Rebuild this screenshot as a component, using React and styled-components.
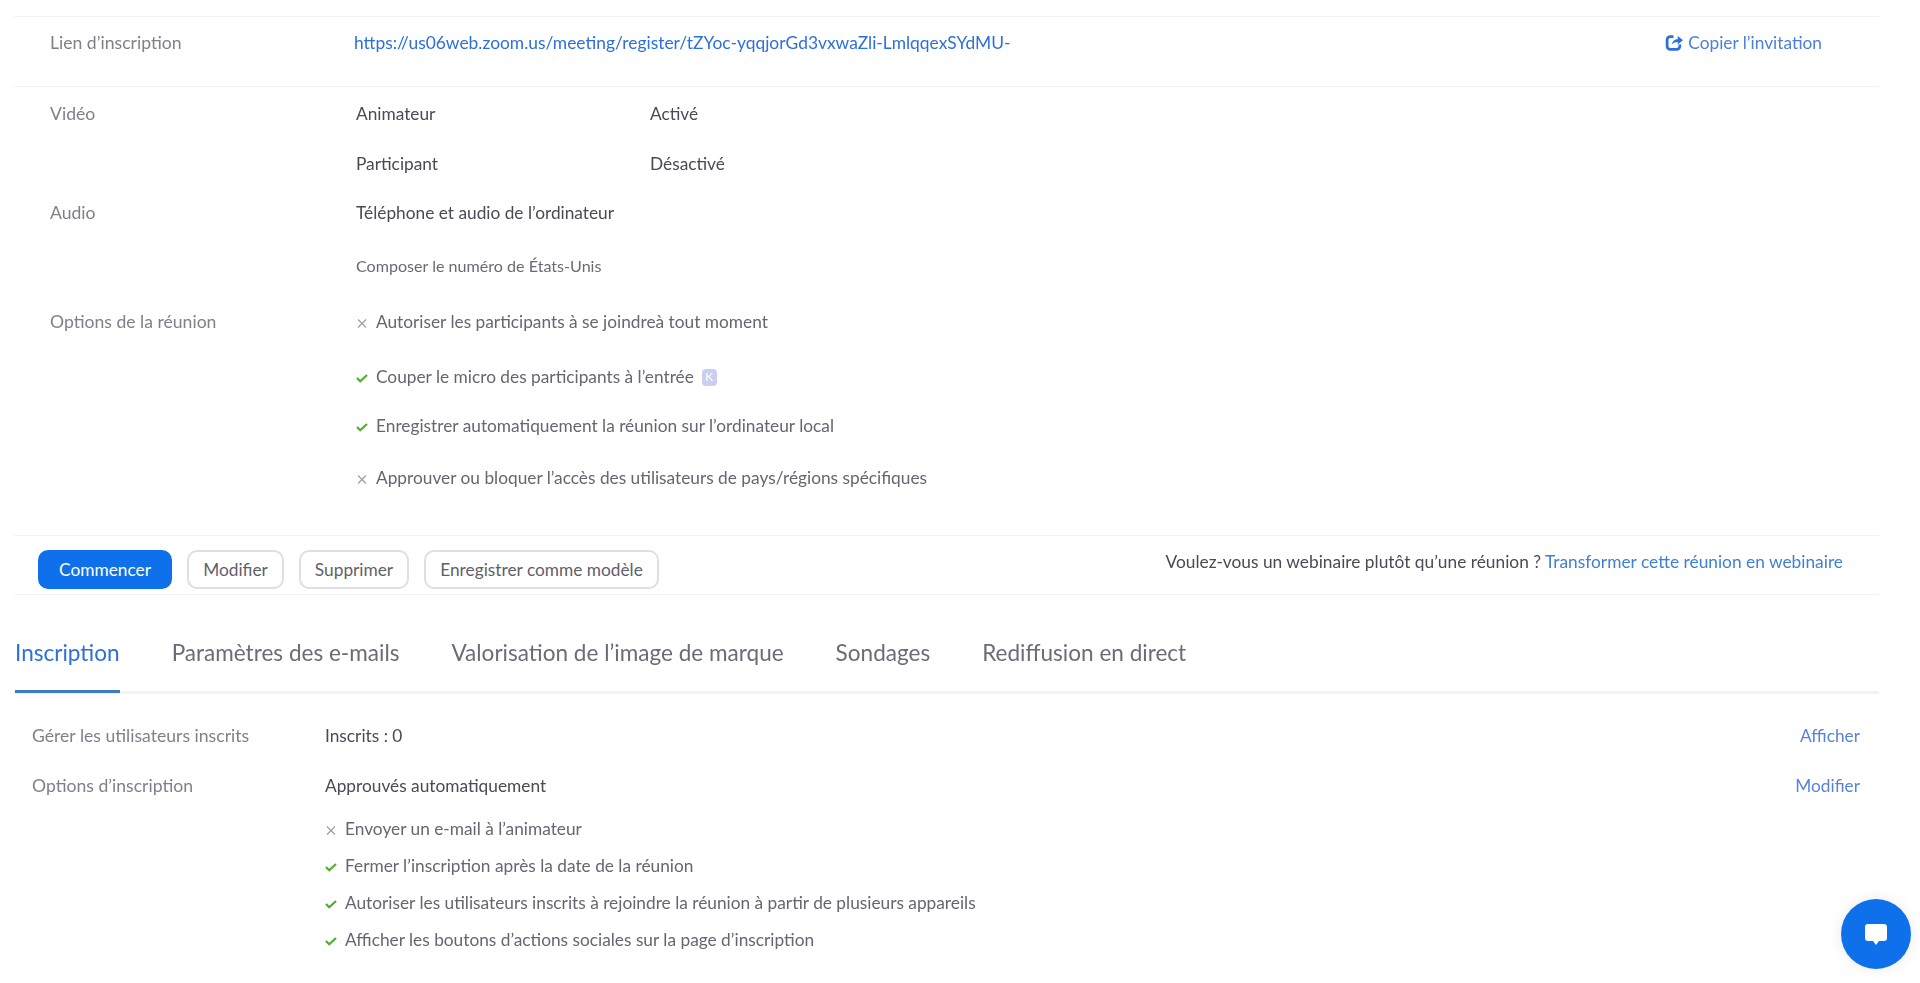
import React from "react";
import styled, { createGlobalStyle } from "styled-components";

const Global = createGlobalStyle`
  html, body { margin: 0; padding: 0; background: #fff; }
  body { font-family: Lato, "Liberation Sans", sans-serif; overflow: hidden; height: 983px; }
`;

const Page = styled.main`
  width: 1920px;
  height: 983px;
  padding: 16px 41px 0 14px;
  box-sizing: border-box;
  position: relative;
  overflow: hidden;
  filter: blur(0.55px);
`;

const Section = styled.section`
  border-top: 1px solid #f3f3f5;
  padding-left: ${(p) => p.$inset || 36}px;
  padding-top: ${(p) => p.$top || 0}px;
`;

const LinkSection = styled(Section)`
  height: 70px;
  display: flex;
  align-items: flex-start;
  padding-top: 16px;
  box-sizing: border-box;
  color: #2d6fdc;
`;

const Row = styled.div`
  display: grid;
  grid-template-columns: ${(p) => p.$label || 306}px auto 1fr;
  height: ${(p) => p.$h}px;
  align-items: center;
  font-size: 17.3px;
`;

const Label = styled.span`
  color: #80808c;
  font-size: 17.6px;
  line-height: 20px;
`;

const LinkLabel = styled(Label)`
  width: 304px;
  flex: none;
`;

const Url = styled.a`
  color: #2d6fdc;
  font-size: 17.4px;
  line-height: 20px;
  flex: 1;
`;

const Copy = styled.a`
  display: inline-flex;
  align-items: center;
  gap: 5px;
  color: #4a7fdc;
  font-size: 17.3px;
  line-height: 20px;
  margin-right: 57px;
`;

const Pair = styled.div`
  display: grid;
  grid-template-columns: 294px auto;
  color: #4b4b57;
`;

const Value = styled.span`
  color: ${(p) => p.$soft ? "#6a6a76" : "#4a4a55"};
  font-size: ${(p) => p.$small ? 16.1 : 17.3}px;
  line-height: 20px;
  padding-bottom: ${(p) => p.$small ? 3 : 0}px;
`;

const Option = styled.div`
  display: flex;
  align-items: center;
  gap: 8px;
  color: #666672;
  font-size: 17.3px;
  line-height: 20px;
`;

const IconSlot = styled.svg`
  width: 12px;
  height: 12px;
  flex: none;
  position: relative;
  top: 1px;
`;

const Info = styled.span`
  display: inline-flex;
  align-items: center;
  justify-content: center;
  width: 15px;
  height: 17px;
  border-radius: 4px;
  background: #c9cfee;
  color: #fff;
  font-size: 12px;
  line-height: 1;
`;

const Spacer = styled.div`
  height: ${(p) => p.$h}px;
`;

const Actions = styled.section`
  border-top: 1px solid #f3f3f5;
  border-bottom: 1px solid #f3f3f5;
  height: 60px;
  box-sizing: border-box;
  display: flex;
  align-items: center;
  padding: 0 36px 0 24px;
  gap: 15px;
`;

const Button = styled.button`
  height: 39px;
  width: ${(p) => p.$w}px;
  padding: 0;
  border-radius: 10px;
  border: 2px solid ${(p) => p.$primary ? "#0e71eb" : "#dedee6"};
  background: ${(p) => p.$primary ? "#0e71eb" : "#fff"};
  color: ${(p) => p.$primary ? "#fff" : "#5f5f6b"};
  font-family: inherit;
  font-size: 17.3px;
  box-sizing: border-box;
  position: relative;
  top: 4px;
`;

const Pitch = styled.p`
  margin: 0 0 0 auto;
  color: #4a4a55;
  font-size: 17.33px;
  position: relative;
  top: -4px;
`;

const PitchLink = styled.a`
  color: #3f7fd6;
`;

const Tabs = styled.nav`
  display: flex;
  gap: 52px;
  height: 98px;
  padding-left: 1px;
  border-bottom: 2px solid #f3f3f5;
  box-sizing: border-box;
`;

const Tab = styled.a`
  display: block;
  font-size: 22.55px;
  line-height: 26px;
  padding-top: 45px;
  height: 98px;
  box-sizing: border-box;
  color: ${(p) => p.$active ? "#2d6fdc" : "#6c6c78"};
  border-bottom: 3px solid ${(p) => p.$active ? "#3f7ac8" : "transparent"};
`;

const RegRow = styled(Row)`
  grid-template-columns: 293px 1fr auto;
  padding-right: 19px;
`;

const Action = styled.a`
  color: #5a82d8;
  font-size: 17.3px;
  line-height: 20px;
`;

const Chat = styled.button`
  position: absolute;
  right: 9px;
  bottom: 14px;
  width: 70px;
  height: 70px;
  padding: 0;
  border: none;
  border-radius: 50%;
  background: #0e71eb;
  box-shadow: 0 0 14px rgba(0,0,0,.09);
  display: flex;
  align-items: center;
  justify-content: center;
`;

const No = () => (
  <IconSlot viewBox="0 0 12 12"><path d="M2 2.5l8 8M10 2.5l-8 8" stroke="#9a9aa4" strokeWidth="1.1" fill="none" /></IconSlot>
);
const Yes = () => (
  <IconSlot viewBox="0 0 12 12"><path d="M1 6l3.2 3.2L11 3" stroke="#4fae2f" strokeWidth="2.2" fill="none" /></IconSlot>
);

const CopyIcon = () => (
  <svg width="18" height="18" viewBox="0 0 17 17">
    <path d="M8 2.5H5a3 3 0 0 0-3 3v6a3 3 0 0 0 3 3h6a3 3 0 0 0 3-3V10" stroke="#2d6fdc" strokeWidth="2.6" fill="none" />
    <path d="M6.5 10c.5-3.5 2.8-5 5.5-5V1.8L17 6l-5 4V7.6c-2 0-4 .6-5.5 2.4z" fill="#2d6fdc" />
  </svg>
);

const Bubble = () => (
  <svg width="26" height="26" viewBox="0 0 26 26">
    <path d="M5 3h16a3 3 0 0 1 3 3v11a3 3 0 0 1-3 3h-5l-3 4-3-4H5a3 3 0 0 1-3-3V6a3 3 0 0 1 3-3z" fill="#fff" />
  </svg>
);

export default function App() {
  return (
    <Page>
      <Global />
      <LinkSection>
        <LinkLabel>Lien d’inscription</LinkLabel>
        <Url>https://us06web.zoom.us/meeting/register/tZYoc-yqqjorGd3vxwaZli-LmlqqexSYdMU-</Url>
        <Copy><CopyIcon />Copier l’invitation</Copy>
      </LinkSection>
      <Section $top={1}>
        <Row $h={52}><Label>Vidéo</Label><Pair><Value>Animateur</Value><Value>Activé</Value></Pair></Row>
        <Row $h={48}><span /><Pair><Value>Participant</Value><Value>Désactivé</Value></Pair></Row>
        <Row $h={50}><Label>Audio</Label><Value>Téléphone et audio de l’ordinateur</Value></Row>
        <Row $h={59}><span /><Value $small $soft>Composer le numéro de États-Unis</Value></Row>
        <Row $h={49}><Label>Options de la réunion</Label><Option><No />Autoriser les participants à se joindreà tout moment</Option></Row>
        <Row $h={62}><span /><Option><Yes />Couper le micro des participants à l’entrée <Info>K</Info></Option></Row>
        <Row $h={36}><span /><Option><Yes />Enregistrer automatiquement la réunion sur l’ordinateur local</Option></Row>
        <Row $h={68}><span /><Option><No />Approuver ou bloquer l’accès des utilisateurs de pays/régions spécifiques</Option></Row>
        <Spacer $h={23} />
      </Section>
      <Actions>
        <Button $primary $w={134}>Commencer</Button>
        <Button $w={97}>Modifier</Button>
        <Button $w={110}>Supprimer</Button>
        <Button $w={235}>Enregistrer comme modèle</Button>
        <Pitch>Voulez-vous un webinaire plutôt qu’une réunion ? <PitchLink>Transformer cette réunion en webinaire</PitchLink></Pitch>
      </Actions>
      <Tabs>
        <Tab $active>Inscription</Tab>
        <Tab>Paramètres des e-mails</Tab>
        <Tab>Valorisation de l’image de marque</Tab>
        <Tab>Sondages</Tab>
        <Tab>Rediffusion en direct</Tab>
      </Tabs>
      <Section $inset={18}>
        <Spacer $h={17} />
        <RegRow $h={50}><Label>Gérer les utilisateurs inscrits</Label><Value>Inscrits : 0</Value><Action>Afficher</Action></RegRow>
        <RegRow $h={50}><Label>Options d’inscription</Label><Value>Approuvés automatiquement</Value><Action>Modifier</Action></RegRow>
        <RegRow $h={36}><span /><Option><No />Envoyer un e-mail à l’animateur</Option></RegRow>
        <RegRow $h={37}><span /><Option><Yes />Fermer l’inscription après la date de la réunion</Option></RegRow>
        <RegRow $h={37}><span /><Option><Yes />Autoriser les utilisateurs inscrits à rejoindre la réunion à partir de plusieurs appareils</Option></RegRow>
        <RegRow $h={37}><span /><Option><Yes />Afficher les boutons d’actions sociales sur la page d’inscription</Option></RegRow>
      </Section>
      <Chat aria-label="Chat"><Bubble /></Chat>
    </Page>
  );
}
